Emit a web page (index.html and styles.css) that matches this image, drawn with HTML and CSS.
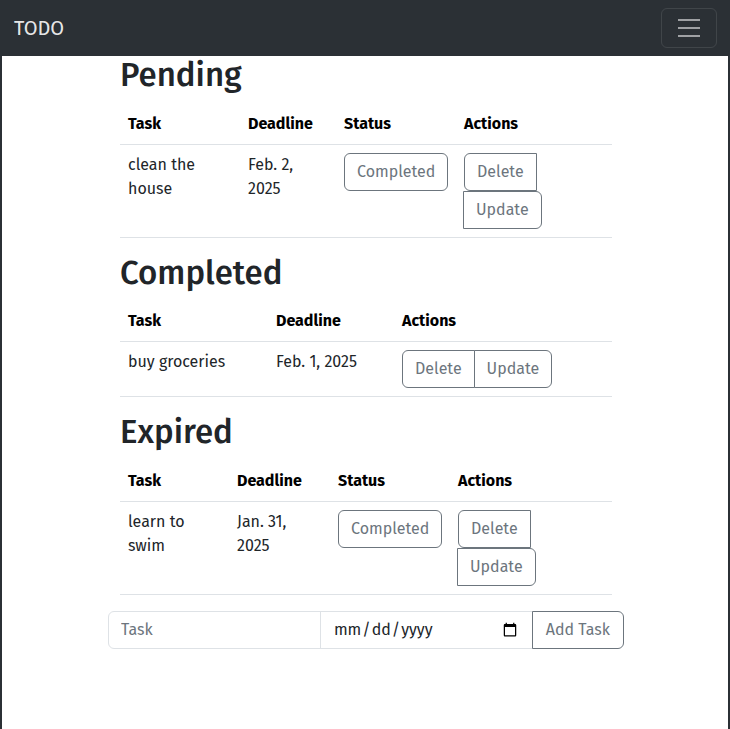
FILE: index.html
```html
<!DOCTYPE html>
<html lang="en">
<head>
<meta charset="utf-8">
<title>TODO</title>
<link rel="stylesheet" href="styles.css">
</head>
<body>
<nav class="navbar">
  <span class="brand">TODO</span>
  <button class="toggler" type="button" aria-label="Toggle navigation">
    <svg class="toggler-icon" viewBox="0 0 30 30" width="30" height="30">
      <path d="M4 7h22M4 15h22M4 23h22" stroke="rgba(255,255,255,0.55)" stroke-width="2" stroke-linecap="butt" fill="none"/>
    </svg>
  </button>
</nav>
<main class="main">
  <section class="list">
    <h1 class="list-title">Pending</h1>
    <table class="tasks">
      <colgroup><col class="c120"><col class="c96"><col class="c120"><col class="c156"></colgroup>
      <thead><tr><th>Task</th><th>Deadline</th><th>Status</th><th>Actions</th></tr></thead>
      <tbody><tr>
        <td>clean the house</td>
        <td>Feb. 2, 2025</td>
        <td><button class="btn">Completed</button></td>
        <td><div class="actions"><button class="btn btn-left">Delete</button><button class="btn btn-right">Update</button></div></td>
      </tr></tbody>
    </table>
  </section>
  <section class="list">
    <h1 class="list-title">Completed</h1>
    <table class="tasks">
      <colgroup><col class="c148"><col class="c126"><col class="c218"></colgroup>
      <thead><tr><th>Task</th><th>Deadline</th><th>Actions</th></tr></thead>
      <tbody><tr>
        <td>buy groceries</td>
        <td>Feb. 1, 2025</td>
        <td><div class="actions"><button class="btn btn-left">Delete</button><button class="btn btn-right">Update</button></div></td>
      </tr></tbody>
    </table>
  </section>
  <section class="list">
    <h1 class="list-title">Expired</h1>
    <table class="tasks">
      <colgroup><col class="c109"><col class="c101"><col class="c120"><col class="c162"></colgroup>
      <thead><tr><th>Task</th><th>Deadline</th><th>Status</th><th>Actions</th></tr></thead>
      <tbody><tr>
        <td>learn to swim</td>
        <td>Jan. 31, 2025</td>
        <td><button class="btn">Completed</button></td>
        <td><div class="actions"><button class="btn btn-left">Delete</button><button class="btn btn-right">Update</button></div></td>
      </tr></tbody>
    </table>
  </section>
  <form class="add-form">
    <input class="field field-first" type="text" placeholder="Task">
    <input class="field field-date" type="date">
    <button class="btn btn-add" type="button">Add Task</button>
  </form>
</main>
</body>
</html>
```
FILE: styles.css
```css
* { box-sizing: border-box; }

html { background: #ffffff; }

body {
  margin: 0;
  min-height: 100vh;
  border-left: 2px solid #2b3035;
  border-right: 2px solid #2b3035;
  background: #ffffff;
  font-family: "Fira Sans", "Open Sans", sans-serif;
  font-size: 16px;
  line-height: 1.5;
  color: #212529;
}

.navbar {
  margin: 0 -2px;
  height: 56px;
  padding: 8px 13px 8px 14px;
  background: #2b3035;
  display: flex;
  align-items: center;
  justify-content: space-between;
}

.brand {
  font-size: 20px;
  line-height: 30px;
  padding: 5px 0;
  color: rgba(255, 255, 255, 0.9);
}

.toggler {
  width: 56px;
  height: 40px;
  padding: 4px 12px;
  background: transparent;
  border: 1px solid rgba(255, 255, 255, 0.1);
  border-radius: 6px;
  display: flex;
  align-items: center;
  justify-content: center;
}

.toggler-icon { display: block; }

.main {
  width: 516px;
  margin-left: calc(50% - 257px);
}

.list { padding: 0 12px; }

.list-title {
  margin: 0 0 8px;
  font-size: 33px;
  line-height: 1.2;
  font-weight: 500;
  color: #212529;
}

.tasks {
  width: 100%;
  table-layout: fixed;
  border-collapse: collapse;
  margin-bottom: 16px;
}

.c96 { width: 96px; }
.c101 { width: 101px; }
.c109 { width: 109px; }
.c120 { width: 120px; }
.c126 { width: 126px; }
.c148 { width: 148px; }
.c156 { width: 156px; }
.c162 { width: 162px; }
.c218 { width: 218px; }

.tasks th,
.tasks td {
  padding: 8px;
  text-align: left;
  vertical-align: top;
  border-bottom: 1px solid #dee2e6;
}

.tasks th { font-weight: 700; color: #000; }

.btn {
  font-family: inherit;
  font-size: 16px;
  line-height: 24px;
  padding: 6px 12px;
  color: #6c757d;
  background: #fff;
  border: 1px solid #6c757d;
  border-radius: 6px;
  cursor: pointer;
}

.actions { display: flex; flex-wrap: wrap; }

.btn-left { border-radius: 6px 0 0 6px; }
.btn-right { border-radius: 0 6px 6px 0; margin-left: -1px; }

.add-form {
  display: flex;
  margin: 0;
}

.field {
  flex: 1 1 auto;
  width: 1%;
  height: 38px;
  padding: 6px 12px;
  font-family: inherit;
  font-size: 16px;
  line-height: 24px;
  color: #212529;
  background: #fff;
  border: 1px solid #dee2e6;
  border-radius: 0;
}

.field::placeholder { color: #6c757d; }

.field-first { border-radius: 6px 0 0 6px; }

.field + .field { margin-left: -1px; }

.field-date::-webkit-datetime-edit-text { padding: 0; }

.btn-add {
  margin-left: -1px;
  padding: 6px 13px;
  border-radius: 0 6px 6px 0;
}
```
